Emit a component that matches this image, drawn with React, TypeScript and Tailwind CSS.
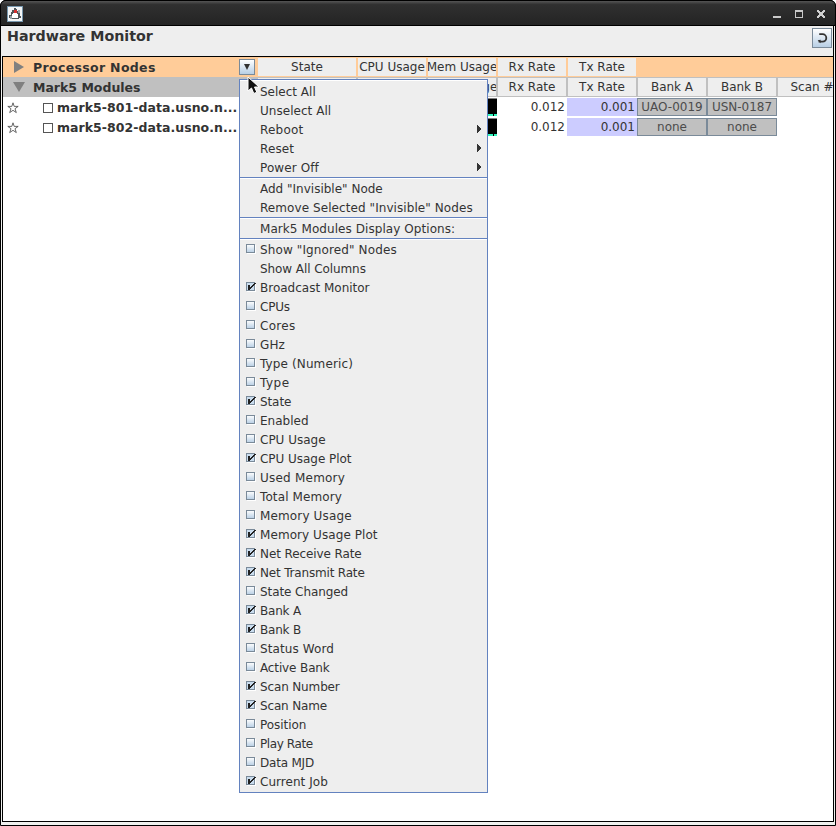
import React from "react";

type Item = { label: string; checked?: boolean; sub?: boolean; tracking?: string };

const actions: Item[] = [
  { label: "Select All" },
  { label: "Unselect All", tracking: "tracking-[0.04px]" },
  { label: "Reboot", sub: true, tracking: "tracking-[0.2px]" },
  { label: "Reset", sub: true, tracking: "tracking-[0.1px]" },
  { label: "Power Off", sub: true, tracking: "tracking-[0.1px]" },
];

const nodes: Item[] = [
  { label: 'Add "Invisible" Node' },
  { label: 'Remove Selected "Invisible" Nodes', tracking: "tracking-[0.075px]" },
];

const columns: Item[] = [
  { label: 'Show "Ignored" Nodes', checked: false, tracking: "tracking-[0.12px]" },
  { label: "Show All Columns", tracking: "tracking-[-0.08px]" },
  { label: "Broadcast Monitor", checked: true },
  { label: "CPUs", checked: false, tracking: "tracking-[-0.2px]" },
  { label: "Cores", checked: false, tracking: "tracking-[0.3px]" },
  { label: "GHz", checked: false, tracking: "tracking-[0.1px]" },
  { label: "Type (Numeric)", checked: false, tracking: "tracking-[0.12px]" },
  { label: "Type", checked: false, tracking: "tracking-[0.5px]" },
  { label: "State", checked: true, tracking: "tracking-[-0.1px]" },
  { label: "Enabled", checked: false },
  { label: "CPU Usage", checked: false },
  { label: "CPU Usage Plot", checked: true, tracking: "tracking-[-0.04px]" },
  { label: "Used Memory", checked: false, tracking: "tracking-[0.22px]" },
  { label: "Total Memory", checked: false, tracking: "tracking-[0.12px]" },
  { label: "Memory Usage", checked: false, tracking: "tracking-[0.14px]" },
  { label: "Memory Usage Plot", checked: true, tracking: "tracking-[0.07px]" },
  { label: "Net Receive Rate", checked: true, tracking: "tracking-[-0.1px]" },
  { label: "Net Transmit Rate", checked: true, tracking: "tracking-[-0.18px]" },
  { label: "State Changed", checked: false, tracking: "tracking-[-0.08px]" },
  { label: "Bank A", checked: true, tracking: "tracking-[-0.2px]" },
  { label: "Bank B", checked: true, tracking: "tracking-[-0.2px]" },
  { label: "Status Word", checked: false, tracking: "tracking-[0.1px]" },
  { label: "Active Bank", checked: false, tracking: "tracking-[-0.13px]" },
  { label: "Scan Number", checked: true, tracking: "tracking-[-0.14px]" },
  { label: "Scan Name", checked: true, tracking: "tracking-[-0.16px]" },
  { label: "Position", checked: false, tracking: "tracking-[-0.06px]" },
  { label: "Play Rate", checked: false, tracking: "tracking-[-0.4px]" },
  { label: "Data MJD", checked: false, tracking: "tracking-[-0.2px]" },
  { label: "Current Job", checked: true, tracking: "tracking-[0.04px]" },
];

function CheckMark({ checked }: { checked: boolean }) {
  return (
    <svg width="11" height="10" viewBox="0 0 11 10" shapeRendering="crispEdges" className="mb-px shrink-0">
      <defs>
        <linearGradient id="box" x1="0" y1="0" x2="0" y2="1">
          <stop offset="0" stopColor="#ffffff" />
          <stop offset="1" stopColor="#b8cfe5" />
        </linearGradient>
      </defs>
      <rect x="1" y="1" width="9" height="9" fill="#ffffff" />
      <rect x="0.5" y="0.5" width="8" height="8" fill={checked ? "#c9dcee" : "url(#box)"} stroke="#7a8a99" />
      {checked && (
        <path d="M2 3h2v2h1v-1h1v-1h1v-1h1v-1h2v1h-1v1h-1v1h-1v1h-1v1h-1v1h-1v1h-2z" fill="#222222" />
      )}
    </svg>
  );
}

function MenuRow({ item }: { item: Item }) {
  return (
    <div className="flex h-[19px] items-center pl-[6px] pr-[6px]">
      <span className="flex w-[14px] shrink-0">
        {item.checked !== undefined && <CheckMark checked={item.checked} />}
      </span>
      <span className={`flex-1 whitespace-pre pt-[2px] leading-[19px] ${item.tracking ?? ""}`}>{item.label}</span>
      {item.sub && (
        <svg width="5" height="8" viewBox="0 0 5 8" shapeRendering="crispEdges" className="mb-px">
          <path d="M1 0h1v1h1v1h1v1h1v2h-1v1h-1v1h-1v1h-1z" fill="#333333" />
        </svg>
      )}
    </div>
  );
}

function Separator() {
  return <div className="h-[2px] border-b border-t border-b-white border-t-[#6382bf]" />;
}

function Menu() {
  return (
    <div className="absolute left-[239px] top-[79px] h-[714px] w-[249px] border border-[#6382bf] bg-[#eeeeee] text-[12px]">
      <div className="border-t border-white pt-px">
        {actions.map((i) => <MenuRow key={i.label} item={i} />)}
      </div>
      <Separator />
      {nodes.map((i) => <MenuRow key={i.label} item={i} />)}
      <Separator />
      <MenuRow item={{ label: "Mark5 Modules Display Options:", tracking: "tracking-[0.07px]" }} />
      <Separator />
      {columns.map((i) => <MenuRow key={i.label} item={i} />)}
    </div>
  );
}

function Head({ children, wide }: { children?: React.ReactNode; wide?: boolean }) {
  return (
    <div className={`${wide ? "w-[98px]" : "w-[68px]"} mr-[2px] flex h-[18px] shrink-0 items-center justify-center overflow-hidden whitespace-nowrap bg-[#eeeeee] text-[12px]`}>
      <span className="shrink-0">{children}</span>
    </div>
  );
}

function NodeRow({ name, a, b }: { name: string; a: string; b: string }) {
  return (
    <div className="flex h-5 items-center">
      <div className="flex w-[254px] shrink-0 items-center">
        <svg width="12" height="12" viewBox="0 0 12 12" className="ml-1 mt-px">
          <path d="M6 .8 7.2 4.4h4L8 6.7l1.3 3.9L6 8.3l-3.3 2.3L4 6.7.8 4.4h4z" fill="white" stroke="#444" strokeWidth=".8" />
        </svg>
        <span className="ml-6 mt-px size-[10px] border border-[#555]" />
        <span className="ml-[4px] whitespace-nowrap pt-px font-bold tracking-[0.04px]">{name}</span>
      </div>
      <div className="w-[170px] shrink-0" />
      <div className="relative h-[18px] w-[70px] shrink-0 border-b-2 border-t border-b-[#32f5be] border-t-[#808080] bg-black">
        <span className="absolute -bottom-0.5 right-[3px] h-0.5 w-px bg-black" />
      </div>
      <div className="w-[70px] shrink-0 pr-[2px] text-right text-[12px]">0.012</div>
      <div className="h-[18px] w-[70px] shrink-0 bg-[#ccccff] pr-[2px] text-right text-[12px] leading-[18px]">0.001</div>
      {[a, b].map((v, i) => (
        <div key={i} className="flex h-[18px] w-[70px] shrink-0 items-center justify-center overflow-hidden whitespace-nowrap border border-[#7a8a99] bg-[#c0c0c0] text-[12px] text-[#4c4c4c]">
          {v}
        </div>
      ))}
    </div>
  );
}

function TitleBar() {
  return (
    <div className="flex h-[26px] shrink-0 items-center rounded-t-[5px] border-b border-t border-b-black border-t-black bg-linear-to-b from-[#555] via-[#303030] via-15% to-[#242424] pl-[6px]">
      <svg width="16" height="16" viewBox="0 0 16 16" shapeRendering="crispEdges" className="mt-[2px]">
        <rect x=".5" y=".5" width="15" height="15" fill="#f3f5f6" stroke="#7797ad" />
        <path d="M7 2h2v1h1v2h1v2h2v3h1v2h-2v1H4v-1H2V9h2V6h1V4h2z" fill="#50565a" />
        <path d="M6 7h4v1h1v4H5V8h1z" fill="#ffffff" />
        <path d="M3 10h2v3H3zM11 4h2v3h-2z" fill="#9aa3a8" />
        <rect x="7" y="4" width="3" height="3" fill="#d33232" />
      </svg>
      <svg width="54" height="10" viewBox="0 0 54 10" shapeRendering="crispEdges" className="ml-auto mr-[8px] mt-[2px]">
        <rect x="0" y="7" width="8" height="2" fill="#c9c9c9" />
        <path d="M22 1h8v8h-8zM23 3v5h6V3z" fill="#c9c9c9" fillRule="evenodd" />
        <path d="M44 1h2v1h1v1h2V2h1V1h2v2h-1v1h-1v2h1v1h1v2h-2V8h-1V7h-2v1h-1v1h-2V7h1V6h1V4h-1V3h-1z" fill="#d0d0d0" />
      </svg>
    </div>
  );
}

export default function App() {
  return (
    <div className="relative flex h-[826px] w-[836px] flex-col overflow-hidden bg-white text-[12.5px] leading-[18px] text-[#333333] [font-family:'DejaVu_Sans',sans-serif]">
      <div className="flex h-full flex-col rounded-t-[6px] border border-black bg-[#eff0ee]">
        <div className="-mx-px -mt-px flex flex-col rounded-t-[6px] bg-black px-px">
          <TitleBar />
        </div>
        <div className="mx-px flex h-[30px] shrink-0 items-start justify-between border-r border-r-black bg-[#eeeeee] pl-[5px]">
          <h1 className="text-[14.25px] font-bold leading-[20px]">Hardware Monitor</h1>
          <div className="mr-px mt-[2px] flex size-5 items-center justify-center border border-[#7a8a99] bg-linear-to-b from-white to-[#b8cfe5]">
            <svg width="12" height="12" viewBox="0 0 12 12" fill="none" stroke="#333" strokeWidth="1.8">
              <path d="M3.2 2.2H6.6a3.7 3.7 0 0 1 0 7.4H2.6" />
              <path d="M1.6 8.2 4.6 7.8v3.4z" fill="#333" stroke="none" />
            </svg>
          </div>
        </div>
        <div className="mx-px mb-[3px] flex-1 overflow-hidden border border-black bg-white">
          <div className="flex h-5 items-center bg-[#ffcc99]">
            <div className="flex w-[255px] shrink-0 items-center">
              <svg width="12" height="12" viewBox="0 0 12 12" className="ml-[10px]">
                <path d="M1 0 11 6 1 12z" fill="#808080" />
              </svg>
              <span className="ml-2 pt-px font-bold tracking-[0.33px]">Processor Nodes</span>
              <span className="ml-auto mr-[3px] flex size-4 items-center justify-center border border-[#7a8a99] bg-linear-to-b from-white to-[#b8cfe5]">
                <svg width="6" height="6" viewBox="0 0 6 6"><path d="M0 0h6L3 6z" fill="#333" /></svg>
              </span>
            </div>
            <Head wide>State</Head>
            <Head>CPU Usage</Head>
            <Head>Mem Usage</Head>
            <Head>Rx Rate</Head>
            <Head>Tx Rate</Head>
          </div>
          <div className="flex h-5 items-center bg-[#c0c0c0]">
            <div className="flex w-[255px] shrink-0 items-center">
              <svg width="12" height="12" viewBox="0 0 12 12" className="ml-[10px]">
                <path d="M0 1h12L6 11z" fill="#808080" />
              </svg>
              <span className="ml-2 pt-px font-bold">Mark5 Modules</span>
            </div>
            <Head wide>State</Head>
            <Head>CPU Usage</Head>
            <Head>Mem Usage</Head>
            <Head>Rx Rate</Head>
            <Head>Tx Rate</Head>
            <Head>Bank A</Head>
            <Head>Bank B</Head>
            <Head>Scan #</Head>
          </div>
          <NodeRow name="mark5-801-data.usno.n..." a="UAO-0019" b="USN-0187" />
          <NodeRow name="mark5-802-data.usno.n..." a="none" b="none" />
        </div>
      </div>
      <Menu />
      <svg width="14" height="20" viewBox="0 0 14 20" className="absolute left-[247px] top-[76px]">
        <path d="M1 1v14l3.5-3 2.3 5.5 3-1.3L7.5 11H12z" fill="#111" stroke="#fff" strokeWidth="1" />
      </svg>
    </div>
  );
}
